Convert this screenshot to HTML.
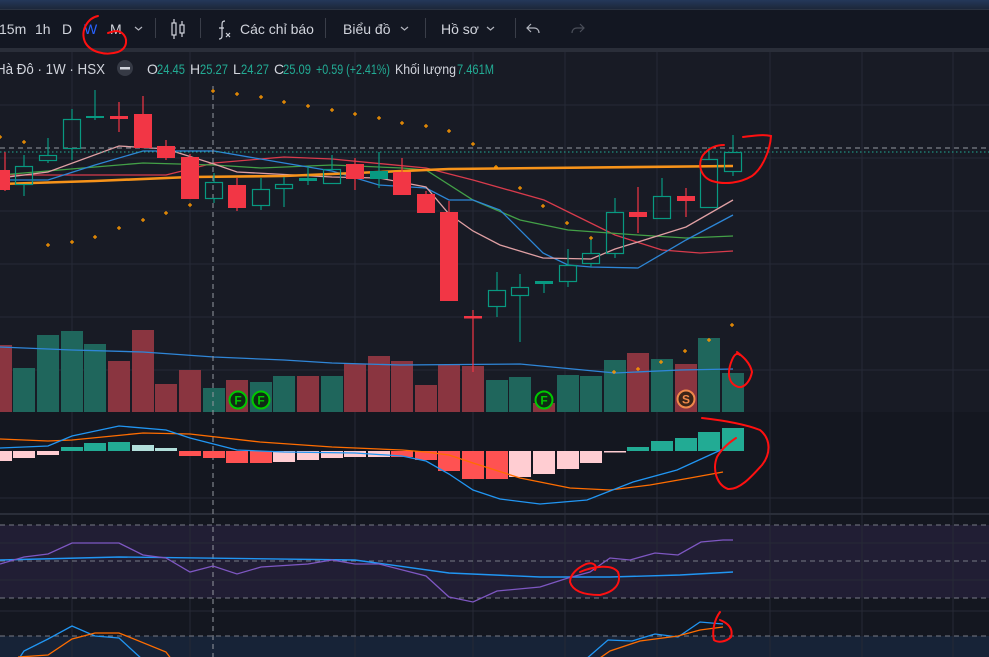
<!DOCTYPE html>
<html><head><meta charset="utf-8"><style>
html,body{margin:0;padding:0;background:#191c26;width:989px;height:657px;overflow:hidden;font-family:"Liberation Sans","Noto Sans CJK SC",sans-serif}
svg{position:absolute;left:0;top:0}
</style></head><body>
<svg width="989" height="657" viewBox="0 0 989 657" xmlns="http://www.w3.org/2000/svg" font-family="Liberation Sans, DejaVu Sans, sans-serif">
<defs><linearGradient id="tg" x1="0" y1="0" x2="0" y2="1"><stop offset="0" stop-color="#24385a"/><stop offset="1" stop-color="#1c2536"/></linearGradient></defs>
<rect width="989" height="657" fill="#181b25"/>
<rect width="989" height="10" fill="url(#tg)"/>
<rect y="9.5" width="989" height="1" fill="#3a3f4b"/>
<rect y="10" width="989" height="38" fill="#131722"/>
<rect y="48" width="989" height="4" fill="#2a2e39"/>
<g fill="#d1d4dc" font-size="14">
<text x="-1" y="34">15m</text><text x="35" y="34">1h</text><text x="62" y="34">D</text>
<text x="84" y="34" fill="#2962ff">W</text><text x="110" y="34">M</text>
<text x="240" y="34">Các chỉ báo</text><text x="343" y="34">Biểu đồ</text><text x="441" y="34">Hồ sơ</text>
</g>
<g stroke="#b2b5be" fill="none" stroke-width="1.2">
<path d="M135 27l3.5 3 3.5-3"/><path d="M401 27l3.5 3 3.5-3"/><path d="M487 27l3.5 3 3.5-3"/>
<path d="M531 24l-4 4 4 4M527 28h7c3 0 5 2 5 5"/>
</g>
<path d="M580 24l4 4-4 4M584 28h-7c-3 0-5 2-5 5" stroke="#4a4e59" fill="none" stroke-width="1.2"/>
<g fill="#3a3e49"><rect x="155" y="18" width="1" height="20"/><rect x="200" y="18" width="1" height="20"/><rect x="325" y="18" width="1" height="20"/><rect x="425" y="18" width="1" height="20"/><rect x="515" y="18" width="1" height="20"/></g>
<g stroke="#d1d4dc" fill="none" stroke-width="1.2"><rect x="172" y="23" width="4" height="12"/><path d="M174 19v4M174 35v4"/><rect x="180" y="25" width="4" height="8"/><path d="M182 21v4M182 33v4"/>
<path d="M225 21c-3 0-3 2-3 4v11c0 2-1 3-3 3M219 28h5"/><path d="M226 33l4 4M230 33l-4 4"/></g>
<g stroke="#262a36" stroke-width="1">
<path d="M72 52V514M190 52V514M355 52V514M473 52V514M565 52V514M657 52V514M770 52V514M862 52V514M953 52V514"/>
<path d="M0 105H989M0 158H989M0 211H989M0 264H989M0 317H989M0 370H989"/>
</g>
<rect x="0" y="412" width="989" height="102" fill="#141720"/>
<g stroke="#262a36"><path d="M72 412V514M190 412V514M355 412V514M473 412V514M565 412V514M657 412V514M770 412V514M862 412V514M953 412V514M0 498H989"/></g>
<rect x="0" y="513" width="989" height="2" fill="#2a2e39"/>
<rect x="0" y="515" width="989" height="142" fill="#141720"/>
<rect x="0" y="525" width="989" height="73" fill="#211e34"/>
<rect x="0" y="636" width="989" height="21" fill="#172337"/>
<g stroke="#262a36"><path d="M72 515V657M190 515V657M355 515V657M473 515V657M565 515V657M657 515V657M770 515V657M862 515V657M953 515V657M0 543H989M0 580H989M0 611H989"/></g>
<g stroke="#787b86" stroke-dasharray="5,4"><path d="M0 525H989M0 561H989M0 598H989M0 636H989"/></g>
<text x="-4" y="74" font-size="15" fill="#d1d4dc" textLength="109" lengthAdjust="spacingAndGlyphs">Hà Đô · 1W · HSX</text>
<circle cx="125" cy="68" r="8" fill="#363a45"/><rect x="120" y="67" width="10" height="2.5" fill="#d1d4dc"/>
<g font-size="14" fill="#d1d4dc">
<text x="147" y="74">O</text><text x="157" y="74" fill="#22ab94" textLength="28" lengthAdjust="spacingAndGlyphs">24.45</text>
<text x="190" y="74">H</text><text x="200" y="74" fill="#22ab94" textLength="28" lengthAdjust="spacingAndGlyphs">25.27</text>
<text x="233" y="74">L</text><text x="241" y="74" fill="#22ab94" textLength="28" lengthAdjust="spacingAndGlyphs">24.27</text>
<text x="274" y="74">C</text><text x="283" y="74" fill="#22ab94" textLength="28" lengthAdjust="spacingAndGlyphs">25.09</text>
<text x="316" y="74" fill="#22ab94" textLength="74" lengthAdjust="spacingAndGlyphs">+0.59 (+2.41%)</text>
<text x="395" y="74" textLength="61" lengthAdjust="spacingAndGlyphs">Khối lượng</text><text x="457" y="74" fill="#22ab94" textLength="37" lengthAdjust="spacingAndGlyphs">7.461M</text>
</g>
<g fill="#8a3540">
<rect x="-6" y="345" width="18" height="67"/><rect x="108" y="361" width="22" height="51"/><rect x="132" y="330" width="22" height="82"/><rect x="155" y="384" width="22" height="28"/><rect x="179" y="370" width="22" height="42"/><rect x="226" y="380" width="22" height="32"/><rect x="297" y="376" width="22" height="36"/><rect x="344" y="364" width="22" height="48"/><rect x="368" y="356" width="22" height="56"/><rect x="391" y="361" width="22" height="51"/><rect x="415" y="385" width="22" height="27"/><rect x="438" y="365" width="22" height="47"/><rect x="462" y="366" width="22" height="46"/><rect x="533" y="403" width="22" height="9"/><rect x="627" y="353" width="22" height="59"/><rect x="675" y="364" width="22" height="48"/>
</g>
<g fill="#1f665c">
<rect x="13" y="368" width="22" height="44"/><rect x="37" y="335" width="22" height="77"/><rect x="61" y="331" width="22" height="81"/><rect x="84" y="344" width="22" height="68"/><rect x="203" y="388" width="22" height="24"/><rect x="250" y="382" width="22" height="30"/><rect x="273" y="376" width="22" height="36"/><rect x="321" y="376" width="22" height="36"/><rect x="486" y="380" width="22" height="32"/><rect x="509" y="377" width="22" height="35"/><rect x="557" y="375" width="22" height="37"/><rect x="580" y="376" width="22" height="36"/><rect x="604" y="360" width="22" height="52"/><rect x="651" y="359" width="22" height="53"/><rect x="698" y="338" width="22" height="74"/><rect x="722" y="373" width="22" height="39"/>
</g>
<polyline fill="none" stroke="#2f86d8" stroke-width="1.3" points="0,347 72,350 143,352 214,357 284,360 332,363 400,365 520,364 615,373 680,370 733,369"/>
<g fill="none" stroke-width="1.3">
<polyline stroke="#d83b4c" points="0,175 166,175 214,163 284,157 332,159 426,168 473,180 544,200 615,235 662,250 700,253 733,251"/>
<polyline stroke="#43a047" points="0,175 95,167 143,163 214,165 261,168 332,165 402,168 426,170 473,200 520,220 568,230 638,235 686,238 733,236"/>
<polyline stroke="#2d86d6" points="0,180 48,180 95,165 143,151 214,151 284,163 332,171 379,185 426,188 449,200 473,200 500,210 543,253 568,265 591,267 638,268 686,240 733,215"/>
<polyline stroke="#e0a0a4" points="0,178 48,172 119,146 166,149 214,164 237,172 332,177 379,178 426,187 449,214 473,231 500,245 543,258 591,259 615,249 638,242 686,227 733,200"/>
<polyline stroke="#f7931a" stroke-width="2.6" points="0,184 95,181 190,177 284,176 379,172 449,169 544,168 733,166"/>
</g>
<path d="M0 148H989" stroke="#9598a1" stroke-dasharray="5,4"/>
<path d="M0 152H989" stroke="#22ab94" stroke-dasharray="1.5,2.5"/>
<path d="M213 86V657" stroke="#9598a1" stroke-dasharray="5,4"/>
<g stroke="#f23645" fill="#f23645" stroke-width="1.2">
<path d="M5 152V191M119 102V132M143 96V148M166 140V160M190 154V199M237 178V211M355 158V190M402 158V195M426 191V213M449 201V301M473 310V372M638 187V233M686 188V217"/>
<rect x="-4" y="170" width="14" height="20" stroke="none"/><rect x="110" y="116" width="18" height="3" stroke="none"/><rect x="134" y="114" width="18" height="34" stroke="none"/><rect x="157" y="146" width="18" height="12" stroke="none"/><rect x="181" y="157" width="18" height="42" stroke="none"/><rect x="228" y="185" width="18" height="23" stroke="none"/><rect x="346" y="164" width="18" height="15" stroke="none"/><rect x="393" y="172" width="18" height="23" stroke="none"/><rect x="417" y="194" width="18" height="19" stroke="none"/><rect x="440" y="212" width="18" height="89" stroke="none"/><rect x="464" y="316" width="18" height="2.5" stroke="none"/><rect x="629" y="212" width="18" height="5" stroke="none"/><rect x="677" y="196" width="18" height="5" stroke="none"/>
</g>
<g stroke="#089981" fill="none" stroke-width="1.2">
<path d="M24 155V166M24 185V196M48 138V155M48 161V163M72 109V119M72 149V160M95 90V120M214 173V182M214 199V203M261 178V189M261 206V210M284 177V184M284 189V207M308 167V185M332 155V169M379 152V188M497 272V290M497 307V317M520 274V287M520 296V342M544 281V293M568 249V265M568 282V287M591 237V253M591 264V267M615 198V212M615 254V258M662 178V196M709 147V159M733 135V152M733 172V176"/>
<rect x="15.5" y="166.5" width="17" height="18"/><rect x="39.5" y="155.5" width="17" height="5"/><rect x="63.5" y="119.5" width="17" height="29"/><rect x="205.5" y="182.5" width="17" height="16"/><rect x="252.5" y="189.5" width="17" height="16"/><rect x="275.5" y="184.5" width="17" height="4"/><rect x="323.5" y="169.5" width="17" height="14"/><rect x="488.5" y="290.5" width="17" height="16"/><rect x="511.5" y="287.5" width="17" height="8"/><rect x="559.5" y="265.5" width="17" height="16"/><rect x="582.5" y="253.5" width="17" height="10"/><rect x="606.5" y="212.5" width="17" height="41"/><rect x="653.5" y="196.5" width="17" height="22"/><rect x="700.5" y="159.5" width="17" height="48"/><rect x="724.5" y="152.5" width="17" height="19"/>
</g>
<g fill="#089981"><rect x="86" y="116" width="18" height="2"/><rect x="299" y="178" width="18" height="3"/><rect x="370" y="171" width="18" height="8"/><rect x="535" y="281" width="18" height="3"/></g>
<g stroke="#ff9800" stroke-width="1.2">
<path d="M-2 137h4M0 135v4M22 142h4M24 140v4M46 245h4M48 243v4M70 242h4M72 240v4M93 237h4M95 235v4M117 228h4M119 226v4M141 220h4M143 218v4M164 213h4M166 211v4M188 205h4M190 203v4M211 91h4M213 89v4M235 94h4M237 92v4M259 97h4M261 95v4M282 102h4M284 100v4M306 106h4M308 104v4M330 110h4M332 108v4M353 114h4M355 112v4M377 118h4M379 116v4M400 123h4M402 121v4M424 126h4M426 124v4M447 131h4M449 129v4M471 144h4M473 142v4M494 167h4M496 165v4M518 188h4M520 186v4M541 206h4M543 204v4M565 223h4M567 221v4M589 238h4M591 236v4M612 372h4M614 370v4M636 369h4M638 367v4M659 362h4M661 360v4M683 351h4M685 349v4M707 340h4M709 338v4M730 325h4M732 323v4"/>
</g>
<g font-size="12" font-weight="bold" text-anchor="middle">
<circle cx="238" cy="400" r="8.5" fill="#0f2b14" stroke="#00c800" stroke-width="2"/><text x="238" y="404.5" fill="#00c800">F</text>
<circle cx="261" cy="400" r="8.5" fill="#0f2b14" stroke="#00c800" stroke-width="2"/><text x="261" y="404.5" fill="#00c800">F</text>
<circle cx="544" cy="400" r="8.5" fill="#0f2b14" stroke="#00c800" stroke-width="2"/><text x="544" y="404.5" fill="#00c800">F</text>
<circle cx="686" cy="399" r="8.5" fill="#3a2418" stroke="#f0894a" stroke-width="2"/><text x="686" y="403.5" fill="#f0894a">S</text>
</g>
<g fill="#ffcdd2"><rect x="-6" y="451" width="18" height="10"/><rect x="13" y="451" width="22" height="7"/><rect x="37" y="451" width="22" height="4"/><rect x="273" y="451" width="22" height="11"/><rect x="297" y="451" width="22" height="9"/><rect x="321" y="451" width="22" height="7"/><rect x="344" y="451" width="22" height="6"/><rect x="368" y="451" width="22" height="6"/><rect x="509" y="451" width="22" height="26"/><rect x="533" y="451" width="22" height="23"/><rect x="557" y="451" width="22" height="18"/><rect x="580" y="451" width="22" height="12"/><rect x="604" y="451" width="22" height="1.5"/></g>
<g fill="#ff5252"><rect x="179" y="451" width="22" height="5"/><rect x="203" y="451" width="22" height="7"/><rect x="226" y="451" width="22" height="12"/><rect x="250" y="451" width="22" height="12"/><rect x="391" y="451" width="22" height="6"/><rect x="415" y="451" width="22" height="9"/><rect x="438" y="451" width="22" height="20"/><rect x="462" y="451" width="22" height="28"/><rect x="486" y="451" width="22" height="28"/></g>
<g fill="#22ab94"><rect x="61" y="447" width="22" height="4"/><rect x="84" y="443" width="22" height="8"/><rect x="108" y="442" width="22" height="9"/><rect x="627" y="447" width="22" height="4"/><rect x="651" y="441" width="22" height="10"/><rect x="675" y="438" width="22" height="13"/><rect x="698" y="432" width="22" height="19"/><rect x="722" y="428" width="22" height="23"/></g>
<g fill="#b2dfdb"><rect x="132" y="445" width="22" height="6"/><rect x="155" y="448" width="22" height="3"/></g>
<polyline fill="none" stroke="#ff6d00" stroke-width="1.3" points="0,439 48,441 72,440 143,433 190,434 260,442 332,447 402,450 426,452 449,455 473,463 520,478 570,488 610,490 650,485 690,478 723,472"/>
<polyline fill="none" stroke="#2196f3" stroke-width="1.3" points="0,448 48,446 72,436 119,426 166,430 190,438 237,450 284,452 355,453 402,456 426,461 449,474 473,490 500,499 540,504 587,500 633,482 677,470 723,449"/>
<polyline fill="none" stroke="#2196f3" stroke-width="1.4" points="0,560 119,557 355,560 449,573 540,577 610,577 680,575 733,572"/>
<polyline fill="none" stroke="#7e57c2" stroke-width="1.3" points="0,564 24,557 48,554 72,543 119,543 143,555 166,558 190,572 213,566 237,574 261,567 308,564 332,560 355,564 379,564 426,576 449,597 473,602 497,591 540,587 568,578 590,572 610,558 630,560 655,553 678,555 701,542 723,540 733,540"/>
<polyline fill="none" stroke="#2196f3" stroke-width="1.3" points="18,660 24,651 48,639 72,626 95,636 119,638 143,660"/>
<polyline fill="none" stroke="#ff6d00" stroke-width="1.3" points="18,657 48,655 72,639 95,633 119,633 166,652 172,660"/>
<polyline fill="none" stroke="#2196f3" stroke-width="1.3" points="585,660 608,640 632,641 655,634 678,637 700,622 723,624"/>
<polyline fill="none" stroke="#ff6d00" stroke-width="1.3" points="597,660 610,651 640,641 678,636 700,630 723,627"/>
<g fill="none" stroke="#ff1010" stroke-width="2" stroke-linecap="round">
<path d="M98 16C88 18 80 30 85 42C90 52 105 56 118 52C128 48 128 38 122 33C118 30 114 31 108 33"/>
<path d="M743 137C752 136 763 134 771 136C770 150 763 168 752 176C740 183 725 185 712 181C698 176 697 159 706 152C712 146 720 145 724 145"/>
<path d="M737 352C742 356 750 362 752 372C750 382 743 390 736 386C728 382 727 372 732 360C734 355 737 352 740 355"/>
<path d="M702 418C720 420 742 423 760 430C772 440 770 455 762 465C752 476 740 490 728 489C717 485 712 470 717 457C722 448 730 442 736 438"/>
<path d="M580 572C594 566 612 564 618 572C622 584 614 592 600 595C586 595 573 592 570 582C570 574 578 568 584 565C592 561 598 565 595 570"/>
<path d="M720 612C714 620 712 632 714 640C718 643 726 642 731 637C733 630 730 624 720 620"/>
</g>
</svg>
</body></html>
